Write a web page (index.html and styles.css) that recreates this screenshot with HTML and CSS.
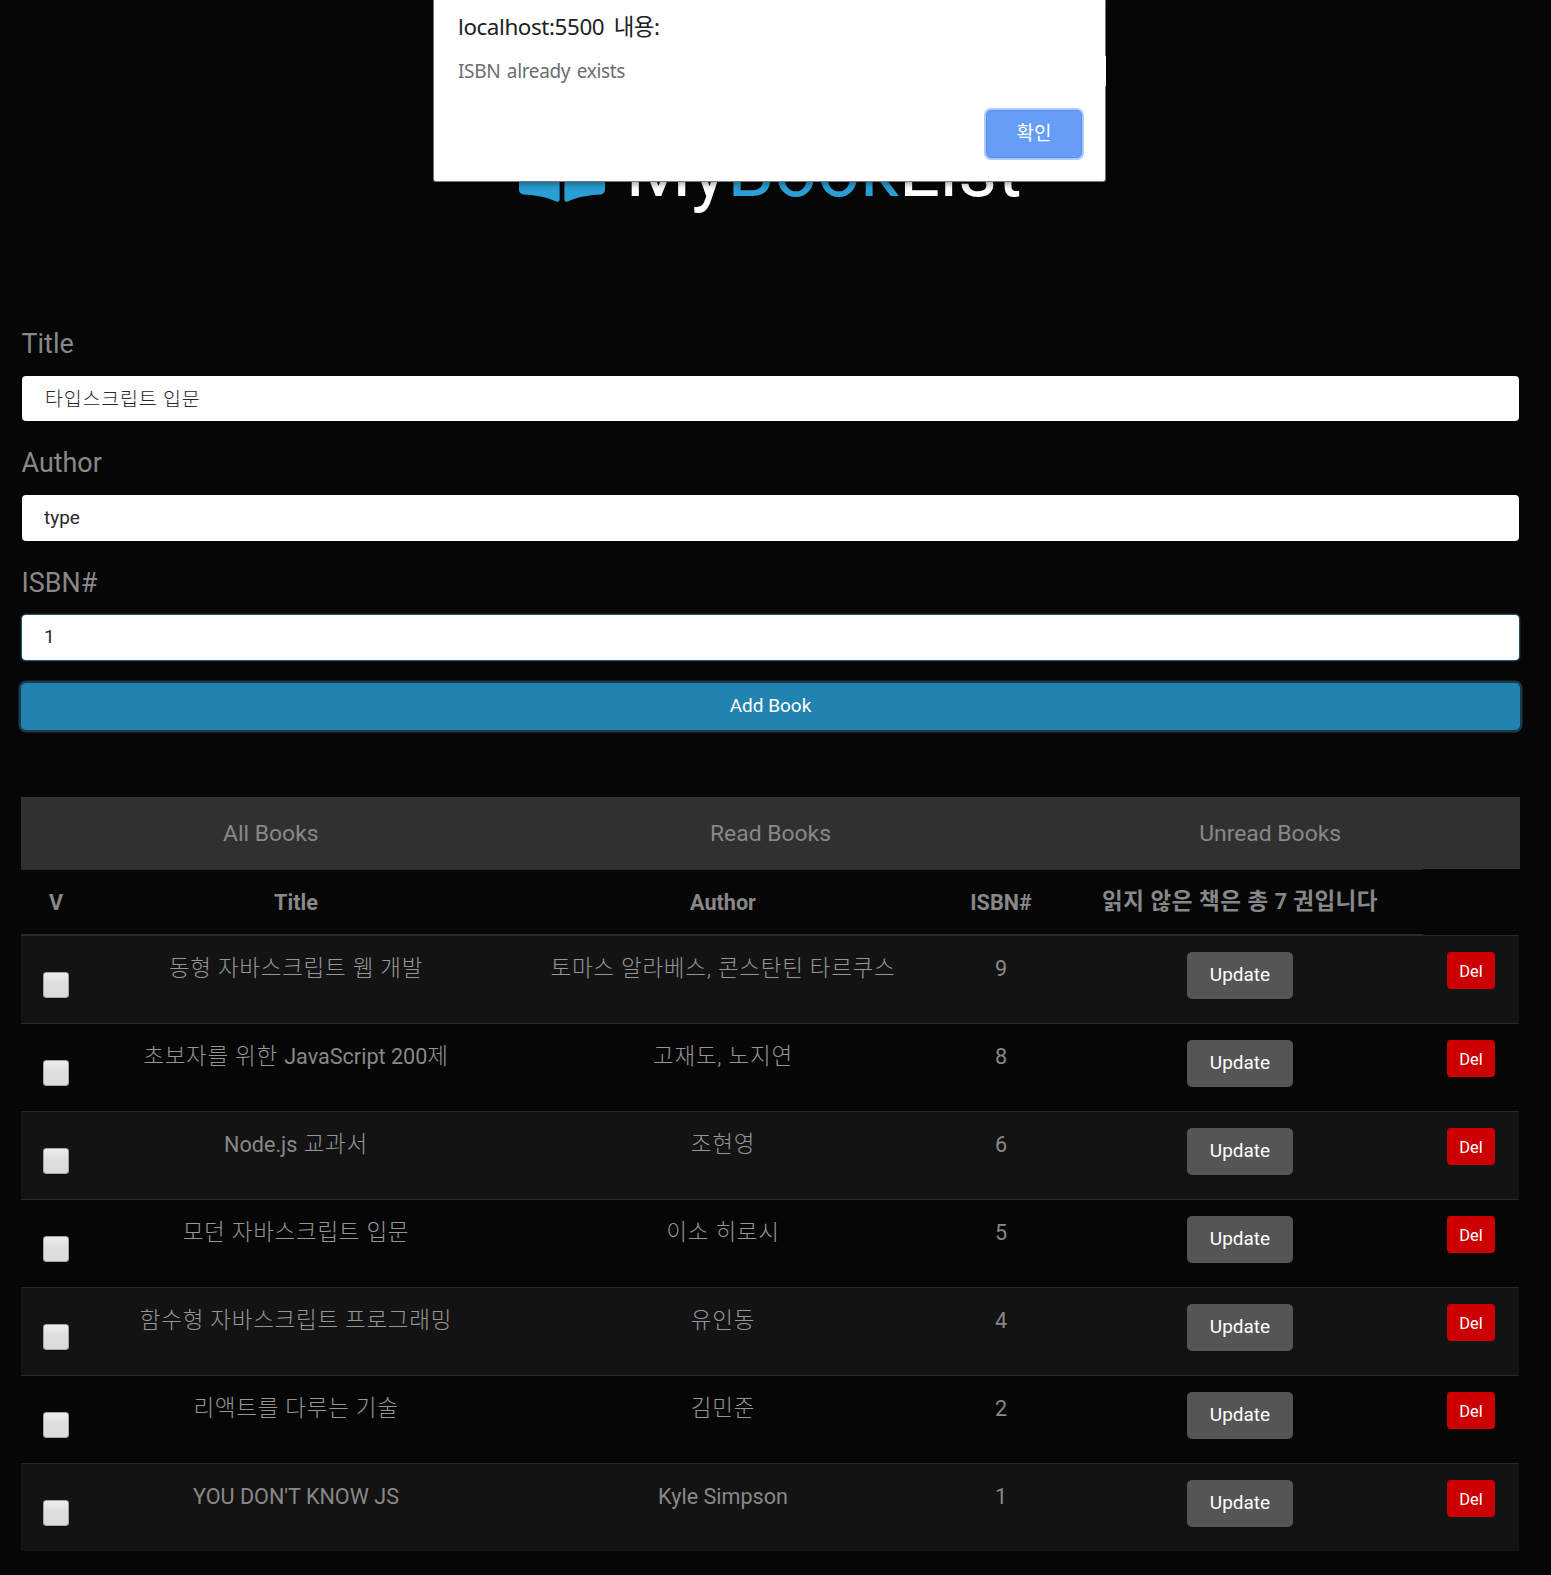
FILE: index.html
```html
<!DOCTYPE html>
<html lang="ko">
<head>
<meta charset="utf-8">
<title>MyBookList</title>
<link rel="stylesheet" href="styles.css">
</head>
<body>
<main class="page">
  <h1 class="brand">
    <svg class="brand-icon" viewBox="0 0 576 512" aria-hidden="true"><path d="M542.22 32.05c-54.8 3.11-163.72 14.43-230.96 55.59-4.64 2.84-7.27 7.89-7.27 13.17v363.87c0 11.55 12.63 18.85 23.28 13.49 69.18-34.82 169.23-44.32 218.7-46.92 16.89-.89 30.02-14.43 30.02-30.66V62.75c.01-17.71-15.35-31.74-33.77-30.7zM264.73 87.64C197.5 46.48 88.58 35.17 33.78 32.05 15.36 31.01 0 45.04 0 62.75V400.6c0 16.24 13.13 29.78 30.02 30.66 49.49 2.6 149.59 12.11 218.77 46.95 10.62 5.35 23.21-1.94 23.21-13.46V100.63c0-5.29-2.62-10.14-7.27-12.99z"/></svg>
    <span class="brand-name">My<span class="accent">Book</span>List</span>
  </h1>
  <form class="book-form">
    <label class="label" for="title">Title</label>
    <input class="field field-ko" id="title" type="text" value="타입스크립트 입문">
    <label class="label" for="author">Author</label>
    <input class="field" id="author" type="text" value="type">
    <label class="label" for="isbn">ISBN#</label>
    <input class="field field-fading" id="isbn" type="text" value="1">
    <button class="add" type="button">Add Book</button>
  </form>
  <nav class="tabs">
    <a class="tab">All Books</a>
    <a class="tab">Read Books</a>
    <a class="tab">Unread Books</a>
  </nav>
  <table class="books">
    <colgroup><col class="c-check"><col class="c-title"><col class="c-author"><col class="c-isbn"><col class="c-update"><col class="c-del"></colgroup>
    <thead>
      <tr><th>V</th><th>Title</th><th>Author</th><th>ISBN#</th><th class="ko">읽지 않은 책은 총 <span class="latin-bold">7</span> 권입니다</th><td class="blank"></td></tr>
    </thead>
    <tbody>
      <tr><td><span class="check"></span></td><td class="ko">동형 자바스크립트 웹 개발</td><td class="ko">토마스 알라베스, 콘스탄틴 타르쿠스</td><td class="text">9</td><td><button class="update">Update</button></td><td><button class="del">Del</button></td></tr>
      <tr><td><span class="check"></span></td><td class="ko">초보자를 위한 <span class="latin">JavaScript 200</span>제</td><td class="ko">고재도, 노지연</td><td class="text">8</td><td><button class="update">Update</button></td><td><button class="del">Del</button></td></tr>
      <tr><td><span class="check"></span></td><td class="ko"><span class="latin">Node.js</span> 교과서</td><td class="ko">조현영</td><td class="text">6</td><td><button class="update">Update</button></td><td><button class="del">Del</button></td></tr>
      <tr><td><span class="check"></span></td><td class="ko">모던 자바스크립트 입문</td><td class="ko">이소 히로시</td><td class="text">5</td><td><button class="update">Update</button></td><td><button class="del">Del</button></td></tr>
      <tr><td><span class="check"></span></td><td class="ko">함수형 자바스크립트 프로그래밍</td><td class="ko">유인동</td><td class="text">4</td><td><button class="update">Update</button></td><td><button class="del">Del</button></td></tr>
      <tr><td><span class="check"></span></td><td class="ko">리액트를 다루는 기술</td><td class="ko">김민준</td><td class="text">2</td><td><button class="update">Update</button></td><td><button class="del">Del</button></td></tr>
      <tr><td><span class="check"></span></td><td class="text">YOU DON'T KNOW JS</td><td class="text">Kyle Simpson</td><td class="text">1</td><td><button class="update">Update</button></td><td><button class="del">Del</button></td></tr>
    </tbody>
  </table>
</main>
<div class="dialog" role="alertdialog">
  <div class="dialog-title">localhost:5500 내용:</div>
  <div class="dialog-text">ISBN already exists</div>
  <button class="ok">확인</button>
</div>
</body>
</html>
```
FILE: styles.css
```css
* { box-sizing: border-box; }
body {
  margin: 0;
  background: #060606;
  color: #888;
  font: 400 21.6px/34px Roboto, "Noto Sans CJK KR", sans-serif;
}
button, input { font-family: inherit; margin: 0; }

.page { padding: 130px 31px 0 21px; height: 1575px; overflow: hidden; }
.brand {
  display: flex;
  justify-content: center;
  align-items: flex-start;
  gap: 20px;
  margin: 0;
  height: 194px;
  color: #fff;
  font-size: 75.6px;
  font-weight: 400;
  line-height: 81px;
}
.brand-icon { width: 86px; height: 76.5px; fill: #2a9fd6; }
.accent { color: #2a9fd6; }

.book-form { display: flex; flex-direction: column; padding: 0 1px; }
.label { height: 52px; margin-left: -.5px; font-size: 26.9px; line-height: 40.6px; }
.field {
  height: 45.3px;
  margin-bottom: 22px;
  padding: 0 22px 1px;
  border: 0;
  border-radius: 4px;
  background: #fff;
  color: #282828;
  font-size: 19px;
}
.field-ko { padding: 0 22px 2px 23px; font-size: 19.5px; font-weight: 300; letter-spacing: .8px; }
.field-fading { box-shadow: 0 0 0 1px #23536b, 0 0 0 2px #0c1c25; }
.add {
  height: 47px;
  margin: 1.1px -1px 0;
  padding: 0 0 2px;
  border: 0;
  border-radius: 5px;
  background: #2283b0;
  box-shadow: 0 0 0 2.5px #1b3a4a;
  color: #fff;
  font-size: 19px;
}

.tabs {
  display: grid;
  grid-template-columns: repeat(3, 1fr);
  height: 72px;
  margin: 67px 0 0;
  background: #303030;
}
.tab { text-align: center; line-height: 73.5px; font-size: 22.9px; }

.books {
  width: 1498px;
  table-layout: fixed;
  border-collapse: separate;
  border-spacing: 0;
  text-align: center;
}
.c-check { width: 70px; }
.c-title { width: 410px; }
.c-author { width: 444px; }
.c-isbn { width: 112px; }
.c-update { width: 366px; }
.c-del { width: 96px; }
.books th { height: 66px; padding: 2px 0 0; border-top: 1px solid #282828; border-bottom: 1px solid #282828; }
.books td { height: 88px; padding: 16px 0 0; border-top: 1px solid #282828; vertical-align: top; line-height: 32px; }
.books td.text { padding-top: 17px; }
.books td.blank { height: 66px; padding: 0; border: 0; }
.books tbody tr:nth-child(odd) { background: #131313; }
.books td.ko { color: #969696; font-size: 22.5px; font-weight: 300; letter-spacing: .72px; }
.books th.ko { padding: 0 0 1px; font-size: 22.5px; letter-spacing: .5px; }
.latin { color: #888; font-size: 21.6px; font-weight: 400; letter-spacing: 0; }
.latin-bold { font-size: 21.6px; letter-spacing: 0; }
.check {
  display: block;
  width: 26px;
  height: 26px;
  margin: 20px auto 0;
  border: 1px solid #a5a5a5;
  border-radius: 3px;
  background: linear-gradient(#eee, #dedede 40%, #dcdcdc);
}
.update, .del { display: block; margin: 0 auto; border: 0; color: #fff; }
.update { width: 106px; height: 47px; padding: 0 0 2px; border-radius: 5px; background: #555; font-size: 19px; }
.del { width: 48px; height: 37px; padding: 2px 0 0; border-radius: 4px; background: #c00; font-size: 16.5px; }

.dialog {
  position: absolute;
  left: 433px;
  top: 0;
  display: flex;
  flex-direction: column;
  width: 673px;
  height: 182px;
  padding: 11px 23px 0 24px;
  border: solid #777;
  border-width: 0 1px 1px;
  border-radius: 0 0 3px 3px;
  background: #fff;
  box-shadow: 0 2px 6px rgba(0, 0, 0, .4);
  font-family: "Noto Sans", "Noto Sans CJK KR", sans-serif;
}
.dialog::after {
  content: "";
  position: absolute;
  top: 56px;
  right: -1px;
  width: 1px;
  height: 30px;
  background: #fff;
}
.dialog-title { height: 45px; line-height: 32px; color: #202124; font-size: 22.4px; letter-spacing: -.4px; word-spacing: 4px; }
.dialog-text { height: 54px; line-height: 30px; color: #6a6d72; font-size: 19px; letter-spacing: -.35px; word-spacing: 2px; }
.ok {
  align-self: flex-end;
  width: 96px;
  height: 48px;
  padding: 0 0 5px;
  border: 1px solid #5491f5;
  border-radius: 5px;
  background: #669df6;
  box-shadow: 0 0 0 2px #aecbfa;
  color: #fff;
  font-size: 19px;
  font-weight: 400;
}
```
